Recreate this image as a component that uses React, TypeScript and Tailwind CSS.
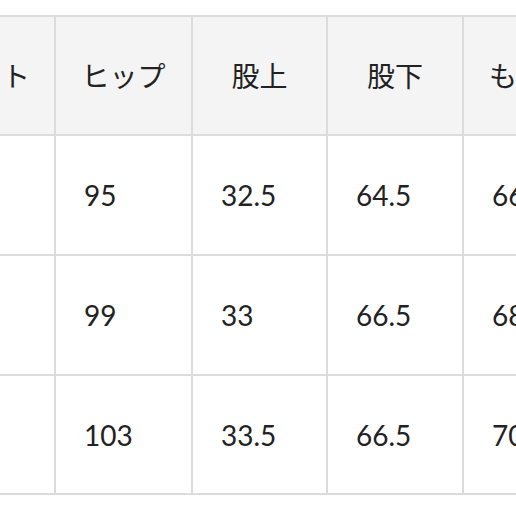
const headers = ['ウエスト', 'ヒップ', '股上', '股下', 'もも幅']

const rows = [
  ['70', '95', '32.5', '64.5', '66'],
  ['74', '99', '33', '66.5', '68'],
  ['78', '103', '33.5', '66.5', '70'],
]

export default function App() {
  return (
    <div className="w-[516px] h-[516px] overflow-hidden bg-white pt-[15px]">
      <div
        className="ml-[-108px] w-max grid grid-cols-[160px_135px_133px_134px_134px_134px] grid-rows-[117px_118px_118px_117px] gap-[2px] p-[2px] bg-[#dcdcdc] text-[28px] text-[#222222]"
        style={{ fontFamily: 'Lato, "Noto Sans CJK JP", sans-serif' }}
      >
        {headers.map((h) => (
          <div key={h} className="bg-[#f4f4f4] flex items-center justify-center">
            {h}
          </div>
        ))}
        <div className="bg-[#f4f4f4]" />
        {rows.map((r, i) =>
          [...r, ''].map((v, j) => (
            <div key={`${i}-${j}`} className="bg-white flex items-center pl-[28px]">
              {v}
            </div>
          ))
        )}
      </div>
    </div>
  )
}
